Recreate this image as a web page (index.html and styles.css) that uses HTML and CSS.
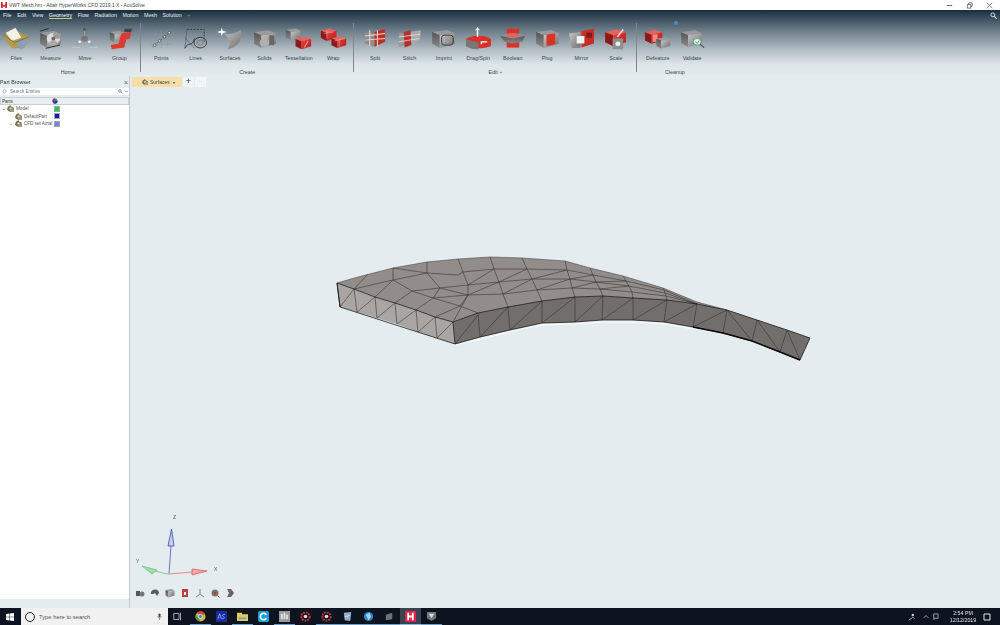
FILE: index.html
```html
<!DOCTYPE html>
<html lang="en">
<head>
<meta charset="utf-8">
<title>VWT Mesh.hm - Altair HyperWorks CFD 2019.1 X - AcuSolve</title>
<link rel="stylesheet" href="styles.css">
</head>
<body>
<svg class="defs" width="0" height="0" aria-hidden="true">
  <defs>
    <linearGradient id="gf" x1="0" y1="0" x2="1" y2="1"><stop offset="0" stop-color="#c9c9c9"/><stop offset="1" stop-color="#6d6d6d"/></linearGradient>
    <linearGradient id="gs" x1="0" y1="0" x2="0" y2="1"><stop offset="0" stop-color="#555"/><stop offset="1" stop-color="#8a8a8a"/></linearGradient>
    <linearGradient id="rf" x1="0" y1="0" x2="1" y2="1"><stop offset="0" stop-color="#f0443c"/><stop offset="1" stop-color="#a81c1c"/></linearGradient>
    <symbol id="gc" viewBox="0 0 20 20">
      <path d="M1 4 13 2 19 5 7 7Z" fill="#9a9a9a"/>
      <path d="M1 4 7 7V19L1 15Z" fill="url(#gs)"/>
      <path d="M7 7 19 5V15L7 19Z" fill="url(#gf)"/>
    </symbol>
    <symbol id="rc" viewBox="0 0 20 20">
      <path d="M1 5 11 2 19 5 8 8Z" fill="#e8625c"/>
      <path d="M1 5 8 8V19L1 15Z" fill="#8c1a1a"/>
      <path d="M8 8 19 5V15L8 19Z" fill="url(#rf)"/>
    </symbol>
    <symbol id="gp" viewBox="0 0 8 8">
      <path d="M4 0 5 2 8 3 7 6 5 8 2 7 0 5 1 2Z" fill="#77704f"/>
      <circle cx="4" cy="4" r="1.500" fill="#d8d2b4"/>
      <path d="M5 4H8V8H4V5Z" fill="#a09a80"/>
    </symbol>
  </defs>
</svg>
<div class="app">
  <header class="titlebar">
    <svg class="logo" viewBox="0 0 7 7"><path d="M0 0H2V2.500L3.500 4 5 2.500V0H7V7H5V4.500L3.500 6 2 4.500V7H0Z" fill="#c8202c"/></svg>
    <span class="title">VWT Mesh.hm - Altair HyperWorks CFD 2019.1 X - AcuSolve</span>
    <div class="winctl">
      <svg viewBox="0 0 8 8"><path d="M1 4H7" stroke="#555"/></svg>
      <svg viewBox="0 0 8 8"><path d="M1.500 3H5.500V7H1.500ZM3 3V1H7V5H5.500" fill="none" stroke="#444" stroke-width=".8"/></svg>
      <svg viewBox="0 0 8 8"><path d="M1 1 7 7M7 1 1 7" stroke="#555" stroke-width=".8"/></svg>
    </div>
  </header>

  <section class="ribbon">
    <nav class="menu">
      <span>File</span><span>Edit</span><span>View</span><span class="on">Geometry</span><span>Flow</span><span>Radiation</span><span>Motion</span><span>Mesh</span><span>Solution</span><span class="plus">+</span>
      <svg class="find" viewBox="0 0 8 8"><circle cx="3.200" cy="3.200" r="2.200" fill="none" stroke="#e8eef2"/><path d="M5 5 7.500 7.500" stroke="#e8eef2" stroke-width="1.200"/></svg>
    </nav>
    <div class="tools">
      <div class="group g1">
        <div class="items">
          <div class="item"><svg viewBox="0 0 28 28" preserveAspectRatio="none"><path d="M1 10 14 5 27 12 22 26 10 26 3 18Z" fill="#b39a4c"/><path d="M3 7 13 1 19 13 9 17Z" fill="#f4f0e4"/><path d="M12 19 21 14 27 19 19 27Z" fill="#8b9fba"/><path d="M1 10 12 19 27 12" fill="none" stroke="#7a682e"/></svg><b>Files</b></div>
          <div class="item"><svg viewBox="0 0 28 28" preserveAspectRatio="none"><use href="#gc" x="2" y="1" width="24" height="27"/><circle cx="17" cy="14" r="7" fill="#d8d8d8"/><path d="M17 7A7 7 0 0 1 24 14H17Z" fill="#9a9a9a"/><path d="M17 14 11 21A8 8 0 0 0 22 20Z" fill="#aaa"/><circle cx="17" cy="14" r="2" fill="#666"/><path d="M3 5 12 2M9 26 24 22" stroke="#222"/></svg><b>Measure</b></div>
          <div class="item"><svg viewBox="0 0 28 28" preserveAspectRatio="none"><path d="M14 3V14L5 22M14 14 23 22" fill="none" stroke="#9a9a9a" stroke-width="1.200"/><circle cx="14" cy="14" r="3.500" fill="#777"/><circle cx="14" cy="3" r="1.600" fill="#555"/><circle cx="9" cy="18" r="1.500" fill="#eee"/><circle cx="19" cy="18" r="1.500" fill="#eee"/><path d="M1 25H9M19 25H27" stroke="#c4c8cc" stroke-width="1.400"/></svg><b>Move</b></div>
          <div class="item"><svg viewBox="0 0 28 28" preserveAspectRatio="none"><use href="#gc" x="3" y="3" width="17" height="17"/><path d="M16 8 26 6 25 14 21 15 19 25 6 27 5 22 13 20 15 12Z" fill="#dd3a32"/><path d="M19 2 27 2 26 6 19 6Z" fill="#444"/></svg><b>Group</b></div>
        </div>
        <p>Home</p>
      </div>
      <div class="group g2">
        <div class="items">
          <div class="item"><svg viewBox="0 0 28 28" preserveAspectRatio="none"><path d="M3 9H25M3 15H25M3 21H25M8 5V25M14 5V25M20 5V25" stroke="#8f979e" stroke-width=".6"/><path d="M5 24 23 6" stroke="#444" stroke-width=".8" stroke-dasharray="1.500 1.500"/><g fill="#f4f6f7" stroke="#333" stroke-width=".7"><circle cx="7" cy="22" r="1.400"/><circle cx="12" cy="17" r="1.400"/><circle cx="17" cy="12" r="1.400"/><circle cx="22" cy="7" r="1.400"/></g></svg><b>Points</b></div>
          <div class="item"><svg viewBox="0 0 28 28" preserveAspectRatio="none"><path d="M5 3H23V18" fill="none" stroke="#333" stroke-dasharray="2 1.500"/><circle cx="19" cy="19" r="6.500" fill="none" stroke="#333"/><circle cx="19" cy="19" r="3" fill="none" stroke="#777"/><path d="M3 26C6 17 10 26 13 14" fill="none" stroke="#333"/><path d="M5 3 3 26M3 13 13 26" stroke="#555" stroke-width=".7"/></svg><b>Lines</b></div>
          <div class="item"><svg viewBox="0 0 28 28" preserveAspectRatio="none"><path d="M7 8C12 10 20 8 25 3 27 15 22 25 11 27 15 20 13 13 7 8Z" fill="url(#gf)"/><path d="M5 1 6 4.500 10 6 6 7.500 5 11 4 7.500 0 6 4 4.500Z" fill="#fff"/></svg><b>Surfaces</b></div>
          <div class="item"><svg viewBox="0 0 28 28" preserveAspectRatio="none"><use href="#gc" x="2" y="1" width="25" height="26"/><circle cx="14" cy="19" r="5" fill="#b0b0b0"/><path d="M19 10H24V22H19Z" fill="#666"/></svg><b>Solids</b></div>
          <div class="item"><svg viewBox="0 0 28 28" preserveAspectRatio="none"><use href="#gc" x="0" y="0" width="17" height="17"/><use href="#rc" x="10" y="10" width="18" height="18"/><path d="M24 17 20 25" stroke="#f3c4c0"/></svg><b>Tessellation</b></div>
          <div class="item"><svg viewBox="0 0 28 28" preserveAspectRatio="none"><use href="#rc" x="0" y="0" width="18" height="18"/><use href="#rc" x="11" y="9" width="17" height="18"/><path d="M4 8 14 6M7 4V14M15 17 26 14M20 14V24" stroke="#f4b3ac" stroke-width=".6"/></svg><b>Wrap</b></div>
        </div>
        <p>Create</p>
      </div>
      <div class="group g3">
        <div class="items">
          <div class="item"><svg viewBox="0 0 28 28" preserveAspectRatio="none"><path d="M3 6 13 8V24L3 20Z" fill="#8d8d8d"/><path d="M13 6 24 2V18L13 24Z" fill="#c02e2a"/><path d="M3 11 24 8M3 16 24 14M8 4V23M16 4V24" stroke="#e8d8d0" stroke-width="1.100"/></svg><b>Split</b></div>
          <div class="item"><svg viewBox="0 0 28 28" preserveAspectRatio="none"><path d="M3 8 13 6V22L3 24Z" fill="#999"/><path d="M13 6 26 4 25 16 13 22Z" fill="#aaa"/><path d="M8 6 15 4 16 22 9 25Z" fill="#b8302c"/><path d="M3 12 25 9M3 18 24 14" stroke="#ececec" stroke-width=".8"/></svg><b>Stitch</b></div>
          <div class="item"><svg viewBox="0 0 28 28" preserveAspectRatio="none"><use href="#gc" x="1" y="1" width="26" height="26"/><rect x="12" y="10" width="12" height="12" rx="3" fill="none" stroke="#333" stroke-width="1"/></svg><b>Imprint</b></div>
          <div class="item"><svg viewBox="0 0 28 28" preserveAspectRatio="none"><path d="M1 15C6 9 22 9 27 15V23C20 27 8 27 1 23Z" fill="#d8302a"/><path d="M1 15 14 19V27C8 27 3 25 1 23Z" fill="#777"/><path d="M13 3V12" stroke="#fff" stroke-width="1.500"/><path d="M13 0 15.500 4H10.500Z" fill="#fff"/><path d="M23 18H17V21" fill="none" stroke="#fff" stroke-width="1.500"/></svg><b>Drag/Spin</b></div>
          <div class="item"><svg viewBox="0 0 28 28" preserveAspectRatio="none"><path d="M8 2H21V25H8Z" fill="#d8322c"/><path d="M1 11 8 8 21 8 27 11 24 18 6 18Z" fill="#8f8f8f"/><path d="M1 11 14 14 27 11 24 18 14 20 6 18Z" fill="url(#gs)"/><ellipse cx="14" cy="10" rx="6" ry="2.500" fill="#e8625c"/></svg><b>Boolean</b></div>
          <div class="item"><svg viewBox="0 0 28 28" preserveAspectRatio="none"><use href="#gc" x="1" y="1" width="26" height="26"/><path d="M13 9 22 8V21L13 23Z" fill="#dd3028"/></svg><b>Plug</b></div>
          <div class="item"><svg viewBox="0 0 28 28" preserveAspectRatio="none"><path d="M1 8 13 6V25L4 26Z" fill="url(#gf)"/><path d="M14 5 27 2V20L14 25Z" fill="#c82d28"/><path d="M9 11H17V20H9Z" fill="#f2f2f2"/><path d="M19 7H25V13H19Z" fill="#7d1a1a"/></svg><b>Mirror</b></div>
          <div class="item"><svg viewBox="0 0 28 28" preserveAspectRatio="none"><use href="#rc" x="2" y="0" width="24" height="25"/><path d="M22 3 16 12" stroke="#f4e4e0" stroke-width="1.500"/><rect x="11" y="14" width="11" height="13" fill="#8f8f8f"/><rect x="14" y="18" width="5" height="5" rx="2" fill="#eee"/></svg><b>Scale</b></div>
        </div>
        <p>Edit <i>+</i></p>
      </div>
      <div class="group g4">
        <div class="items">
          <div class="item"><svg viewBox="0 0 28 28" preserveAspectRatio="none"><use href="#rc" x="0" y="1" width="20" height="21"/><path d="M9 9H14V18H9Z" fill="#f08a80"/><use href="#gc" x="12" y="11" width="16" height="16"/></svg><b>Defeature</b></div>
          <div class="item"><svg viewBox="0 0 28 28" preserveAspectRatio="none"><use href="#gc" x="1" y="1" width="24" height="25"/><circle cx="19" cy="18" r="4" fill="#e8f2ec" stroke="#5f9f7a"/><path d="M17 18 19 20 21 16.500" fill="none" stroke="#2d8f58"/><path d="M22 21 26 25" stroke="#555" stroke-width="1.300"/></svg><b>Validate</b></div>
        </div>
        <p>Cleanup</p>
        <span class="badge"></span>
      </div>
    </div>
  </section>

  <main class="work">
    <aside class="panel">
      <div class="ptitle"><span>Part Browser</span><em>×</em></div>
      <div class="psearch"><svg viewBox="0 0 8 8"><circle cx="4" cy="3.500" r="2.500" fill="none" stroke="#999"/><path d="M2 6 1 7.500" stroke="#999"/></svg><span class="ph">Search Entities</span><svg viewBox="0 0 8 8"><circle cx="3" cy="3" r="2" fill="none" stroke="#555"/><path d="M4.500 4.500 7 7" stroke="#555"/></svg><svg viewBox="0 0 8 8"><path d="M2 3 4 5 6 3" fill="none" stroke="#555"/></svg></div>
      <div class="pcols"><span>Parts</span><svg viewBox="0 0 8 8"><path d="M4 4V.5A3.500 3.500 0 0 1 7.500 4Z" fill="#2ea043"/><path d="M4 4H7.500A3.500 3.500 0 0 1 1 6Z" fill="#2a2acb"/><path d="M4 4 1 6A3.500 3.500 0 0 1 4 .5Z" fill="#a02a6a"/></svg></div>
      <ul class="tree">
        <li class="l0"><i>-</i><svg viewBox="0 0 8 8"><use href="#gp"/></svg><span>Model</span><u class="sw1"></u></li>
        <li class="l1"><i></i><svg viewBox="0 0 8 8"><use href="#gp"/></svg><span>DefaultPart</span><u class="sw2"></u></li>
        <li class="l2"><i>+</i><svg viewBox="0 0 8 8"><use href="#gp"/></svg><span>CFD set Airtal</span><u class="sw3"></u></li>
      </ul>
    </aside>
    <div class="view">
      <div class="tabs">
        <div class="tab"><svg viewBox="0 0 8 8"><use href="#gp"/></svg><span>Surfaces</span><i>▾</i></div>
        <div class="tabbtn">+</div>
        <div class="tabbtn dim">··</div>
      </div>
      <svg class="mesh" viewBox="0 0 1000 625">
        <path d="M453 345 482 339 512 331 542 325 575 324 603 322 637 322 667 324 693 329" fill="none" stroke="#fbfcfc" stroke-width="1.200"/>
        <path class="top" d="M337 283 358 277 393 268 427 262 458 259 490 257 522 258 565 261 590 268 623 276 663 288 697 302 727 310 697 304 667 300 633 298 603 296 575 297 542 301 508 307 478 313 453 322 435 317 416 310 395 303 375 297 354 289Z"/>
        <path class="front" d="M337 283 354 289 375 297 395 303 416 310 435 317 453 322 455 344 437 338 418 332 397 324 377 318 357 312 340 307Z"/>
        <path class="side" d="M453 322 478 313 508 307 542 301 575 297 603 296 633 298 667 300 697 304 727 310 757 320 787 330 810 338 800 360 780 352 752 341 723 333 693 327 664 322 633 320 602 320 575 322 542 323 510 330 480 337 455 344Z"/>
        <path class="wire" d="M468 295 503 294 537 290 572 288 600 289 632 292 666 296 697 304M468 285 499 282 532 279 570 279 596 282 629 286 665 293 697 304M463 272 494 269 527 269 567 270 593 275 626 281 664 290 697 304M458 259 463 272 468 285 468 295 453 322M490 257 494 269 499 282 503 294 508 307M522 258 527 269 532 279 537 290 542 301M565 261 567 270 570 279 572 288 575 297M590 268 593 275 596 282 600 289 603 296M623 276 626 281 629 286 632 292 633 298M663 288 664 290 665 293 666 296 667 300"/>
        <path class="wire" d="M354 289 368 274M375 297 393 280 393 268M354 289 393 280M393 280 412 291 433 298 460 306 478 313M395 303 412 291M416 310 433 298M435 317 460 306M412 291 440 288M433 298 440 288M393 280 427 273 458 275 463 272M393 268 427 273M427 262 427 273 440 288 468 295M440 288 468 285M433 298 468 295M460 306 468 295"/>
        <path class="wire" d="M468 295 499 282M503 294 532 279M537 290 570 279M572 288 596 282M600 289 629 286M468 285 494 269M499 282 527 269M532 279 567 270M570 279 593 275M596 282 626 281"/>
        <path class="wire" d="M354 289 357 312M375 297 377 318M395 303 397 324M416 310 418 332M435 317 437 338M340 307 354 289M357 312 375 297M377 318 395 303M397 324 416 310M418 332 435 317M437 338 453 322"/>
        <path class="wire" d="M478 313 480 337M508 307 510 330M542 301 542 323M575 297 575 322M603 296 602 320M633 298 633 320M667 300 664 322M697 304 693 327M727 310 723 333M757 320 752 341M787 330 780 352M455 344 478 315M480 337 508 307M510 330 542 301M542 323 575 297M575 322 603 296M602 320 633 298M633 320 667 300M664 322 697 304M693 327 727 310M727 310 752 341M757 320 780 352M787 330 800 360"/>
        <path class="edge" d="M337 283 354 289 375 297 395 303 416 310 435 317 453 322 478 313 508 307 542 301 575 297 603 296 633 298 667 300 697 304 727 310 757 320 787 330 810 338 800 360 780 352 752 341 723 333 693 327 664 322 633 320 602 320 575 322 542 323 510 330 480 337 455 344 340 307Z M453 322 455 344 M337 283 340 307"/>
        <path class="heavy" d="M693 327 723 333 752 341 780 352 800 360"/>
        <path class="back" d="M337 283 358 277 393 268 427 262 458 259 490 257 522 258 565 261 590 268 623 276 663 288 697 302 727 310"/>
        <g class="axes">
          <path d="M169 574 171 546" stroke="#4a55b8" stroke-width=".8"/>
          <path d="M171.500 529 174 546H168Z" fill="#c4d0ea" stroke="#3a45a8" stroke-width=".8"/>
          <path d="M169 574C160 573 152 570 150 569" fill="none" stroke="#7ed08a"/>
          <path d="M142 566 157 570 152 574Z" fill="#9fe0a8" stroke="#5fb06d" stroke-width=".6"/>
          <path d="M169 574 192 572" stroke="#e88a8a"/>
          <path d="M207 571 192 569 192 575Z" fill="#f5a8a8" stroke="#d85050" stroke-width=".7"/>
        </g>
        <text x="173" y="519">Z</text><text x="136" y="563">Y</text><text x="214" y="571">X</text>
      </svg>
      <div class="viewtools">
        <svg viewBox="0 0 10 10"><path d="M1 3H5V8H1Z" fill="#555"/><circle cx="7" cy="6" r="2.500" fill="#777"/></svg>
        <svg viewBox="0 0 10 10"><path d="M1 6A4 4 0 0 1 9 5L7 8 5 5 3 6Z" fill="#5b5b5b"/></svg>
        <svg viewBox="0 0 10 10"><use href="#gc"/></svg>
        <svg viewBox="0 0 10 10"><rect x="2" y="1" width="6" height="8" fill="#b94040"/><rect x="4" y="4" width="2" height="3" fill="#eee"/></svg>
        <svg viewBox="0 0 10 10"><path d="M5 1V6L1 9M5 6 9 9" fill="none" stroke="#888"/></svg>
        <svg viewBox="0 0 10 10"><circle cx="5" cy="5" r="3.500" fill="#777"/><circle cx="5" cy="5" r="1.500" fill="#c03a3a"/><path d="M7.500 7.500 9.500 9.500" stroke="#555"/></svg>
        <svg viewBox="0 0 10 10"><path d="M2 1H6L9 5 6 9H2L4 5Z" fill="#666"/><path d="M4 4H8" stroke="#c03a3a"/></svg>
      </div>
    </div>
  </main>

  <footer class="taskbar">
    <svg class="win" viewBox="0 0 8 8"><path d="M0 1 3.500.5V3.700H0ZM4 .4 8 0V3.700H4ZM0 4.300H3.500V7.500L0 7ZM4 4.300H8V8L4 7.600Z" fill="#fff"/></svg>
    <div class="search"><span class="cortana"></span><span class="q">Type here to search</span><svg viewBox="0 0 8 10"><rect x="2.500" y="0" width="3" height="6" rx="1.500" fill="#444"/><path d="M1 4.500C1 8 7 8 7 4.500M4 7.500V10" fill="none" stroke="#444" stroke-width=".8"/></svg></div>
    <svg class="tv" viewBox="0 0 12 12"><path d="M1 2H8V10H1ZM10 1V11" fill="none" stroke="#cfd4d8"/></svg>
    <div class="apps">
      <div class="app-i u"><svg viewBox="0 0 12 12"><circle cx="6" cy="6" r="5.500" fill="#e0b32c"/><path d="M6 .5A5.500 5.500 0 0 1 11 4H6L2 2.500A5.500 5.500 0 0 1 6 .5Z" fill="#d64535"/><path d="M1 4 4 8 6 11.500A5.500 5.500 0 0 1 1 4Z" fill="#3f9f50"/><circle cx="6" cy="6" r="2.300" fill="#4a88e0" stroke="#fff" stroke-width=".6"/></svg></div>
      <div class="app-i"><svg viewBox="0 0 12 12"><rect width="12" height="12" fill="#1c2aa0"/><path d="M2 9 4 3 6 9M7 8C9 9 10 7 8 6S8 3 10 4" fill="none" stroke="#8fb0ff"/></svg></div>
      <div class="app-i u"><svg viewBox="0 0 12 12"><path d="M0 2H5L6 3.500H12V11H0Z" fill="#e8c95a"/><path d="M2 7H10V9H2Z" fill="#5fa8d8"/></svg></div>
      <div class="app-i"><svg viewBox="0 0 12 12"><rect width="12" height="12" rx="2" fill="#1a9fd8"/><path d="M9 4A3.500 3.500 0 1 0 9 8" fill="none" stroke="#fff" stroke-width="1.800"/></svg></div>
      <div class="app-i u"><svg viewBox="0 0 12 12"><rect width="12" height="12" fill="#9a9a9a"/><path d="M2 3H4V9H2ZM5 2H7V9H5ZM8 4H10V9H8Z" fill="#e2e2e2"/></svg></div>
      <div class="app-i"><svg viewBox="0 0 12 12"><circle cx="6" cy="6" r="4.500" fill="none" stroke="#b8343c" stroke-width="2.200" stroke-dasharray="2 1"/><circle cx="6" cy="6" r="2" fill="#ddd"/></svg></div>
      <div class="app-i u"><svg viewBox="0 0 12 12"><circle cx="6" cy="6" r="4.500" fill="none" stroke="#b8343c" stroke-width="2.200" stroke-dasharray="2 1"/><circle cx="6" cy="6" r="2" fill="#ddd"/></svg></div>
      <div class="app-i u"><svg viewBox="0 0 12 12"><path d="M2 2 10 1 9 11 3 10Z" fill="#8fb0c8"/><path d="M3 6 9 5" stroke="#dfe8ee"/></svg></div>
      <div class="app-i u"><svg viewBox="0 0 12 12"><circle cx="6" cy="6" r="5" fill="#2a86c8"/><path d="M3 4 7 2 9 6 6 10Z" fill="#a0d0ea"/></svg></div>
      <div class="app-i u"><svg viewBox="0 0 12 12"><path d="M2 4 9 2V9L2 10Z" fill="#6a7278"/></svg></div>
      <div class="app-i act"><svg viewBox="0 0 12 12"><rect width="12" height="12" rx="1" fill="#e0244c"/><path d="M2.500 2H4.500V5H7.500V2H9.500V10H7.500V7H4.500V10H2.500Z" fill="#fff"/></svg></div>
      <div class="app-i u"><svg viewBox="0 0 12 12"><path d="M1 1H11V8L6 11 1 8Z" fill="#70757a"/><path d="M3 3H9L6 8Z" fill="#d8dadc"/></svg></div>
    </div>
    <div class="tray">
      <svg class="t1" viewBox="0 0 10 10"><circle cx="6" cy="2.500" r="1.500" fill="#ccd"/><path d="M3 8 6 5 8 7M1 9 3 7" fill="none" stroke="#ccd"/></svg>
      <svg class="t2" viewBox="0 0 8 8"><path d="M1 5 4 2 7 5" fill="none" stroke="#cdd2d6"/></svg>
      <svg class="t3" viewBox="0 0 8 8"><path d="M2 1H7V6H2ZM1 7H3" fill="none" stroke="#cdd2d6" stroke-width=".8"/></svg>
      <div class="clock"><span>2:54 PM</span><span>12/12/2019</span></div>
      <svg class="t4" viewBox="0 0 8 8"><path d="M1 1H7V7H1Z" fill="none" stroke="#e2e6e8"/></svg>
    </div>
  </footer>
</div>
</body>
</html>
```

FILE: styles.css
```css
* { box-sizing: border-box; margin: 0; padding: 0; }
html, body { width: 1000px; height: 625px; overflow: hidden; }
body { font-family: "Liberation Sans", Arial, sans-serif; background: #e4ecf0; color: #333; }
.defs { position: absolute; }
svg { display: block; flex: none; }
.app { width: 1000px; height: 625px; display: flex; flex-direction: column; filter: blur(.3px); }

.titlebar { height: 10px; flex: none; background: #fff; display: flex; align-items: center; padding-left: 1px; gap: 1px; font-size: 5px; color: #444; }
.logo { width: 6px; height: 6px; }
.title { line-height: 10px; margin-left: 1px; white-space: nowrap; }
.winctl { margin-left: auto; display: flex; gap: 13px; padding-right: 7px; }
.winctl svg { width: 7px; height: 7px; }

.ribbon { height: 66px; flex: none; background: linear-gradient(#182c3c 0, #2e4252 8%, #6a7a86 30%, #a6b2ba 55%, #dce5e8 82%, #e3ebee 100%); position: relative; }
.menu { height: 10px; display: flex; align-items: center; gap: 5.600px; padding: 0 3px 0; font-size: 5.300px; color: #e8edf0; white-space: nowrap; }
.menu .on { border-bottom: 1px solid #c9c86a; line-height: 6px; color: #fff; margin-top: 1px; }
.menu .plus { color: #7d8e9a; }
.find { width: 7px; height: 7px; margin-left: auto; }
.tools { display: flex; height: 56px; margin-left: -1px; }
.group { position: relative; display: flex; flex-direction: column; align-items: center; }
.group + .group { padding-left: 3.500px; }
.g1, .g2, .g3 { padding-right: 4px; }
.g1::after, .g2::after, .g3::after { content: ""; position: absolute; right: 0; top: 3px; height: 49px; width: 1px; background: #7b8891; }
.items { display: flex; }
.item { width: 34.400px; display: flex; flex-direction: column; align-items: center; padding-top: 7px; }
.item svg { width: 27px; height: 23px; }
.item b { font-weight: normal; font-size: 5.300px; line-height: 6px; margin-top: 5px; color: #3c4248; white-space: nowrap; }
.group p { font-size: 5.300px; line-height: 6px; margin-top: 8px; color: #3c4248; }
.group p i { font-style: normal; color: #7b8891; }
.badge { position: absolute; left: 37px; top: 1px; width: 4px; height: 4px; border-radius: 50%; background: #4b8cc8; }

.work { flex: 1; display: flex; min-height: 0; }
.panel { width: 130px; flex: none; display: flex; flex-direction: column; font-size: 4.600px; padding-bottom: 9px; border-right: 1px solid #c4ccd0; }
.ptitle { height: 12px; flex: none; display: flex; justify-content: space-between; align-items: center; padding: 0 1px 0 0; font-size: 5.300px; }
.ptitle em { font-style: normal; font-size: 7px; color: #555; }
.psearch { height: 7px; flex: none; background: #fff; display: flex; align-items: center; padding-left: 2px; gap: 1px; color: #777; font-size: 4.500px; }
.psearch .ph { flex: 1; margin-left: 2px; }
.psearch svg { width: 5px; height: 5px; }
.pcols { height: 8px; flex: none; margin-top: 2px; background: #e8eef1; display: flex; align-items: center; justify-content: space-between; padding-right: 70px; border: 1px solid #c8d0d4; }
.pcols span { margin-left: 1px; }
.pcols svg { width: 6px; height: 6px; }
.tree { list-style: none; flex: 1; background: #fff; padding-top: 0; }
.tree li { height: 7.500px; display: flex; align-items: center; position: relative; white-space: nowrap; color: #555; }
.tree i { font-style: normal; font-weight: bold; width: 7px; text-align: center; color: #555; font-size: 5px; }
.tree svg { width: 7px; height: 7px; margin-right: 2px; }
.tree .l1 { padding-left: 8px; }
.tree .l1 i { width: 7px; }
.tree .l2 { padding-left: 7px; }
.tree .l2 i { width: 8px; color: #aaa; font-weight: normal; }
.tree u { position: absolute; left: 54px; top: .5px; width: 6px; height: 6px; border: 1px solid #9aa; }
.sw1 { background: #22cc44; }
.sw2 { background: #1a1ab8; }
.sw3 { background: #8a7ae0; }

.view { flex: 1; position: relative; min-width: 0; }
.tabs { display: flex; gap: 1px; padding: 1px 0 0 2px; position: relative; }
.tab { width: 50px; height: 10px; background: #f5dfa8; display: flex; align-items: center; padding-left: 10px; gap: 2px; font-size: 5px; color: #444; }
.tab svg { width: 6px; height: 6px; }
.tab i { font-style: normal; font-size: 4px; margin-left: 1px; }
.tabbtn { width: 11px; height: 10px; background: #f2f5f6; text-align: center; font-size: 9px; line-height: 9px; color: #333; }
.tabbtn.dim { color: #aaa; font-size: 6px; }
.mesh { position: absolute; left: -130px; top: -76px; width: 1000px; height: 625px; pointer-events: none; }
.top { fill: #928d8a; }
.front { fill: #a8a5a3; }
.side { fill: #716e6c; }
.wire { fill: none; stroke: #2f2d2c; stroke-width: .55; }
.edge { fill: none; stroke: #1b1918; stroke-width: .8; stroke-linejoin: round; }
.heavy { fill: none; stroke: #0c0b0a; stroke-width: 1.400; }
.back { fill: none; stroke: #4b4845; stroke-width: .6; }
.mesh text { font-size: 5px; fill: #555; }
.viewtools { position: absolute; left: 5px; bottom: 10px; display: flex; gap: 5px; }
.viewtools svg { width: 10px; height: 10px; }

.taskbar { height: 17px; flex: none; background: #0d1420; display: flex; align-items: center; }
.win { width: 8px; height: 8px; margin-left: 6px; }
.search { width: 147px; height: 17px; margin-left: 7px; background: #f1f1f1; display: flex; align-items: center; padding-left: 4px; font-size: 5.800px; color: #555; }
.cortana { width: 10px; height: 10px; border: 1.500px solid #222; border-radius: 50%; }
.q { margin-left: 4px; flex: 1; }
.search svg { width: 5px; height: 7px; margin-right: 6px; }
.tv { width: 9px; height: 9px; margin-left: 5px; }
.apps { display: flex; margin-left: 8px; }
.app-i { width: 21px; height: 17px; display: flex; align-items: center; justify-content: center; border-bottom: 1px solid transparent; }
.app-i svg { width: 11px; height: 11px; }
.app-i.u { border-bottom-color: #6d9fc8; }
.app-i.act { background: #39424e; border-bottom-color: #8fb8d8; }
.tray { margin-left: auto; display: flex; align-items: center; color: #dfe4e8; font-size: 5.300px; padding-right: 9px; }
.t1 { width: 8px; height: 8px; margin-right: 7px; }
.t2 { width: 6px; height: 6px; margin-right: 3px; }
.t3 { width: 7px; height: 7px; margin-right: 7px; }
.clock { width: 34px; display: flex; flex-direction: column; align-items: center; line-height: 7px; margin-right: 3px; }
.t4 { width: 8px; height: 8px; }
```
